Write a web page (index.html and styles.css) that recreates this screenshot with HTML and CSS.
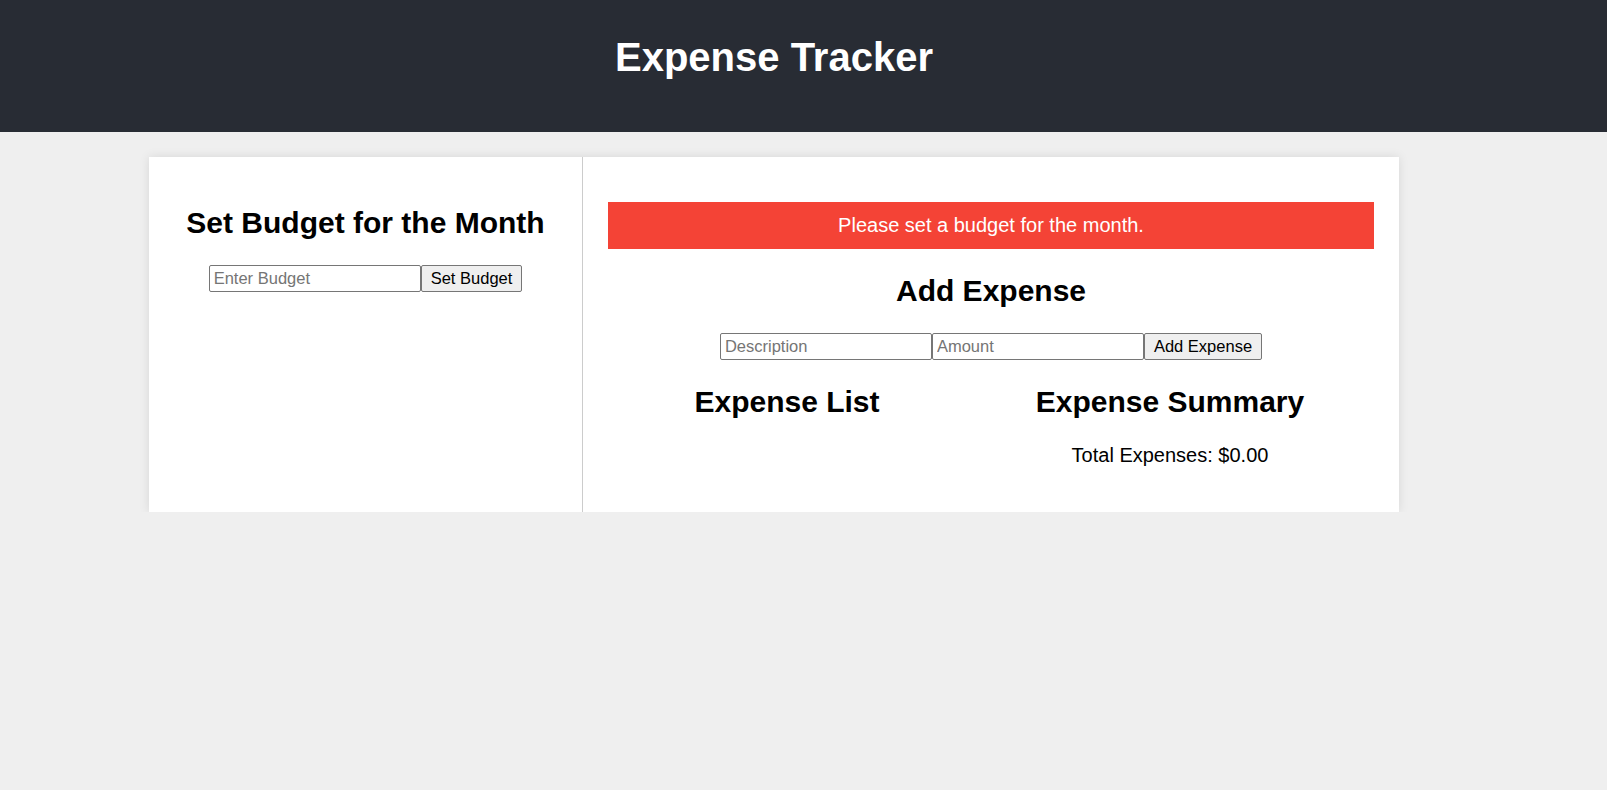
FILE: index.html
```html
<!DOCTYPE html>
<html lang="en">
<head>
<meta charset="utf-8">
<title>Expense Tracker</title>
<link rel="stylesheet" href="styles.css">
</head>
<body>
<header class="app-header">
  <div class="header-inner">
    <h1 class="app-title">Expense Tracker</h1>
  </div>
</header>
<main class="card">
  <section class="panel panel-budget">
    <h2 class="section-title">Set Budget for the Month</h2>
    <div class="form-row"><input class="field" type="number" placeholder="Enter Budget"><button class="btn">Set Budget</button></div>
  </section>
  <section class="panel panel-expenses">
    <div class="alert">Please set a budget for the month.</div>
    <h2 class="section-title">Add Expense</h2>
    <div class="form-row"><input class="field" type="text" placeholder="Description"><input class="field" type="number" placeholder="Amount"><button class="btn">Add Expense</button></div>
    <div class="columns">
      <div class="column">
        <h2 class="section-title">Expense List</h2>
        <ul class="expense-list"></ul>
      </div>
      <div class="column">
        <h2 class="section-title">Expense Summary</h2>
        <p class="total">Total Expenses: $0.00</p>
      </div>
    </div>
  </section>
</main>
</body>
</html>
```

FILE: styles.css
```css
* { box-sizing: border-box; }

body {
  margin: 0;
  background: #efefef;
  font-family: "Liberation Sans", Arial, sans-serif;
  font-size: 20px;
  color: #000;
}

.app-header {
  background: #282c34;
  color: #fff;
  padding: 34px 0 52px;
}

.header-inner {
  width: 1548px;
  text-align: center;
}

.app-title {
  margin: 0;
  font-size: 40px;
  line-height: 46px;
  font-weight: bold;
}

.card {
  display: flex;
  width: 1250px;
  margin: 25px 0 0 149px;
  background: #fff;
  box-shadow: 0 0 10px rgba(0, 0, 0, 0.1);
}

.panel {
  padding: 25px;
  text-align: center;
}

.panel-budget {
  flex: 1;
  border-right: 1px solid #ccc;
}

.panel-budget .section-title {
  margin-top: 23.9px;
}

.panel-expenses {
  flex: 2;
}

.section-title {
  font-size: 30px;
  font-weight: bold;
  margin: 24.9px 0;
}

.form-row {
  display: flex;
  justify-content: center;
}

.field {
  width: 212px;
  height: 27px;
  font-family: "Liberation Sans", Arial, sans-serif;
  font-size: 16.5px;
  padding: 1px 4px;
  border: 1px solid #767676;
  border-radius: 2px;
  background: #fff;
  color: #000;
}

.field::placeholder { color: #757575; }

.btn {
  height: 27px;
  font-family: "Liberation Sans", Arial, sans-serif;
  font-size: 16.5px;
  padding: 0 9px;
  border: 1px solid #767676;
  border-radius: 2px;
  background: #efefef;
  color: #000;
}

.alert {
  margin: 20px 0;
  padding: 11px 12px 12px;
  line-height: 24px;
  background: #f44336;
  color: #fff;
  font-size: 20px;
}

.columns {
  display: flex;
  gap: 25px;
  padding-right: 25px;
}

.column {
  flex: 1;
}

.expense-list {
  margin: 20px 0;
  padding: 0;
  list-style: none;
}

.total {
  margin: 20px 0;
}
```
